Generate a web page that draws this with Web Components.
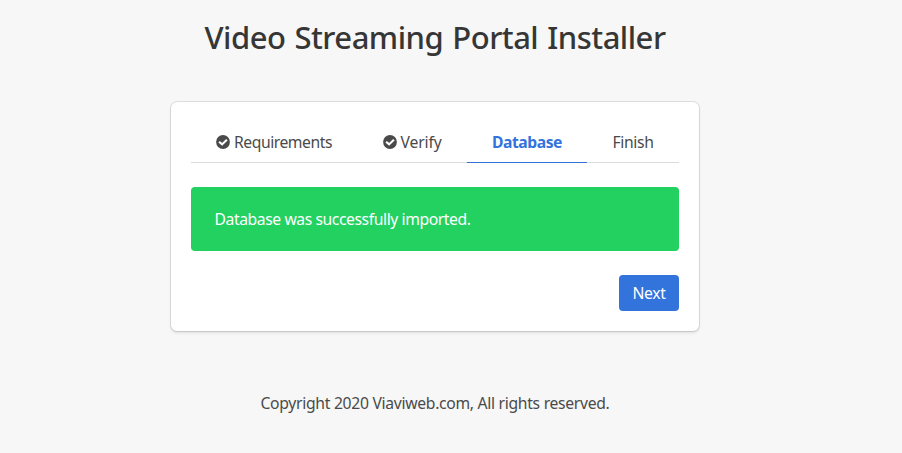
<!DOCTYPE html>
<html lang="en"><head><meta charset="utf-8"><title>Video Streaming Portal Installer</title>
<style>
html,body{margin:0;background:#f7f7f7;height:453px;overflow:hidden}
body{font-family:"Noto Sans","Open Sans",sans-serif;font-size:15.7px;line-height:24px;color:#4a4a4a}
</style></head><body>
<installer-page>
<fit-text slot="title" w="461">Video Streaming Portal Installer</fit-text>
<installer-card>
<step-tabs>
<step-tab done style="width:166px"><fit-text w="98">Requirements</fit-text></step-tab>
<step-tab done style="width:110px"><fit-text w="41">Verify</fit-text></step-tab>
<step-tab active style="width:120px"><fit-text w="70">Database</fit-text></step-tab>
<step-tab style="width:92px"><fit-text w="41">Finish</fit-text></step-tab>
</step-tabs>
<status-note><fit-text w="256">Database was successfully imported.</fit-text></status-note>
<action-button><fit-text w="33">Next</fit-text></action-button>
</installer-card>
<fit-text slot="footer" w="349">Copyright 2020 Viaviweb.com, All rights reserved.</fit-text>
</installer-page>
<script>
const define=(name,css,html,setup)=>customElements.define(name,class extends HTMLElement{
  constructor(){super();this.attachShadow({mode:'open'}).innerHTML=`<style>*{box-sizing:border-box}${css}</style>${html}`}
  connectedCallback(){if(setup)setup(this)}
});
define('installer-page',`:host{display:flex;flex-direction:column;align-items:center;width:870px}
h1{margin:19px 0 0;font-size:31px;line-height:36px;font-weight:500;word-spacing:1.5px;color:#363636;height:82px}
footer{margin-top:60px;height:24px}`,
`<h1><slot name="title"></slot></h1><slot></slot><footer><slot name="footer"></slot></footer>`);
define('installer-card',`:host{display:flex;flex-direction:column;box-sizing:border-box;width:528px;height:229px;margin-top:1px;padding:20px;background:#fff;border-radius:6px;box-shadow:0 2px 3px rgba(10,10,10,.1),0 0 0 1px rgba(10,10,10,.1)}`,`<slot></slot>`);
define('step-tabs',`:host{display:flex;box-sizing:border-box;height:41px;margin-bottom:24px;border-bottom:1px solid #dbdbdb}`,`<slot></slot>`);
define('step-tab',`:host{display:flex;box-sizing:border-box;justify-content:center;align-items:center;height:41px;border-bottom:1px solid #dbdbdb;gap:4px}
:host([active]){color:#3273dc;font-weight:700;border-color:#3273dc}
svg{display:none;width:14px;height:14px}:host([done]) svg{display:block}`,
`<svg viewBox="0 0 14 14"><circle cx="7" cy="7" r="6.9" fill="#4a4a4a"/><path d="M3.1 6.7 6.1 9.4 10.9 4.7" fill="none" stroke="#fff" stroke-width="2.1"/></svg><slot></slot>`);
define('status-note',`:host{display:flex;box-sizing:border-box;height:64px;padding:20px 23.5px;margin-bottom:24px;border-radius:4px;background:#23d160;color:#fff}`,`<slot></slot>`);
define('action-button',`:host{align-self:flex-end}button{display:flex;align-items:center;justify-content:center;width:60px;height:36px;padding:0;border:0;border-radius:4px;background:#3273dc;color:#fff;font:inherit}`,`<button><slot></slot></button>`);
/* Adjusts letter spacing so each label occupies its nominal width. */
define('fit-text',`:host{display:block;white-space:nowrap}span{display:inline-block}`,`<span><slot></slot></span>`,el=>{
  const s=el.shadowRoot.querySelector('span'),w=+el.getAttribute('w');
  s.style.letterSpacing=(w-s.getBoundingClientRect().width)/el.textContent.length+'px';
});
</script></body></html>
